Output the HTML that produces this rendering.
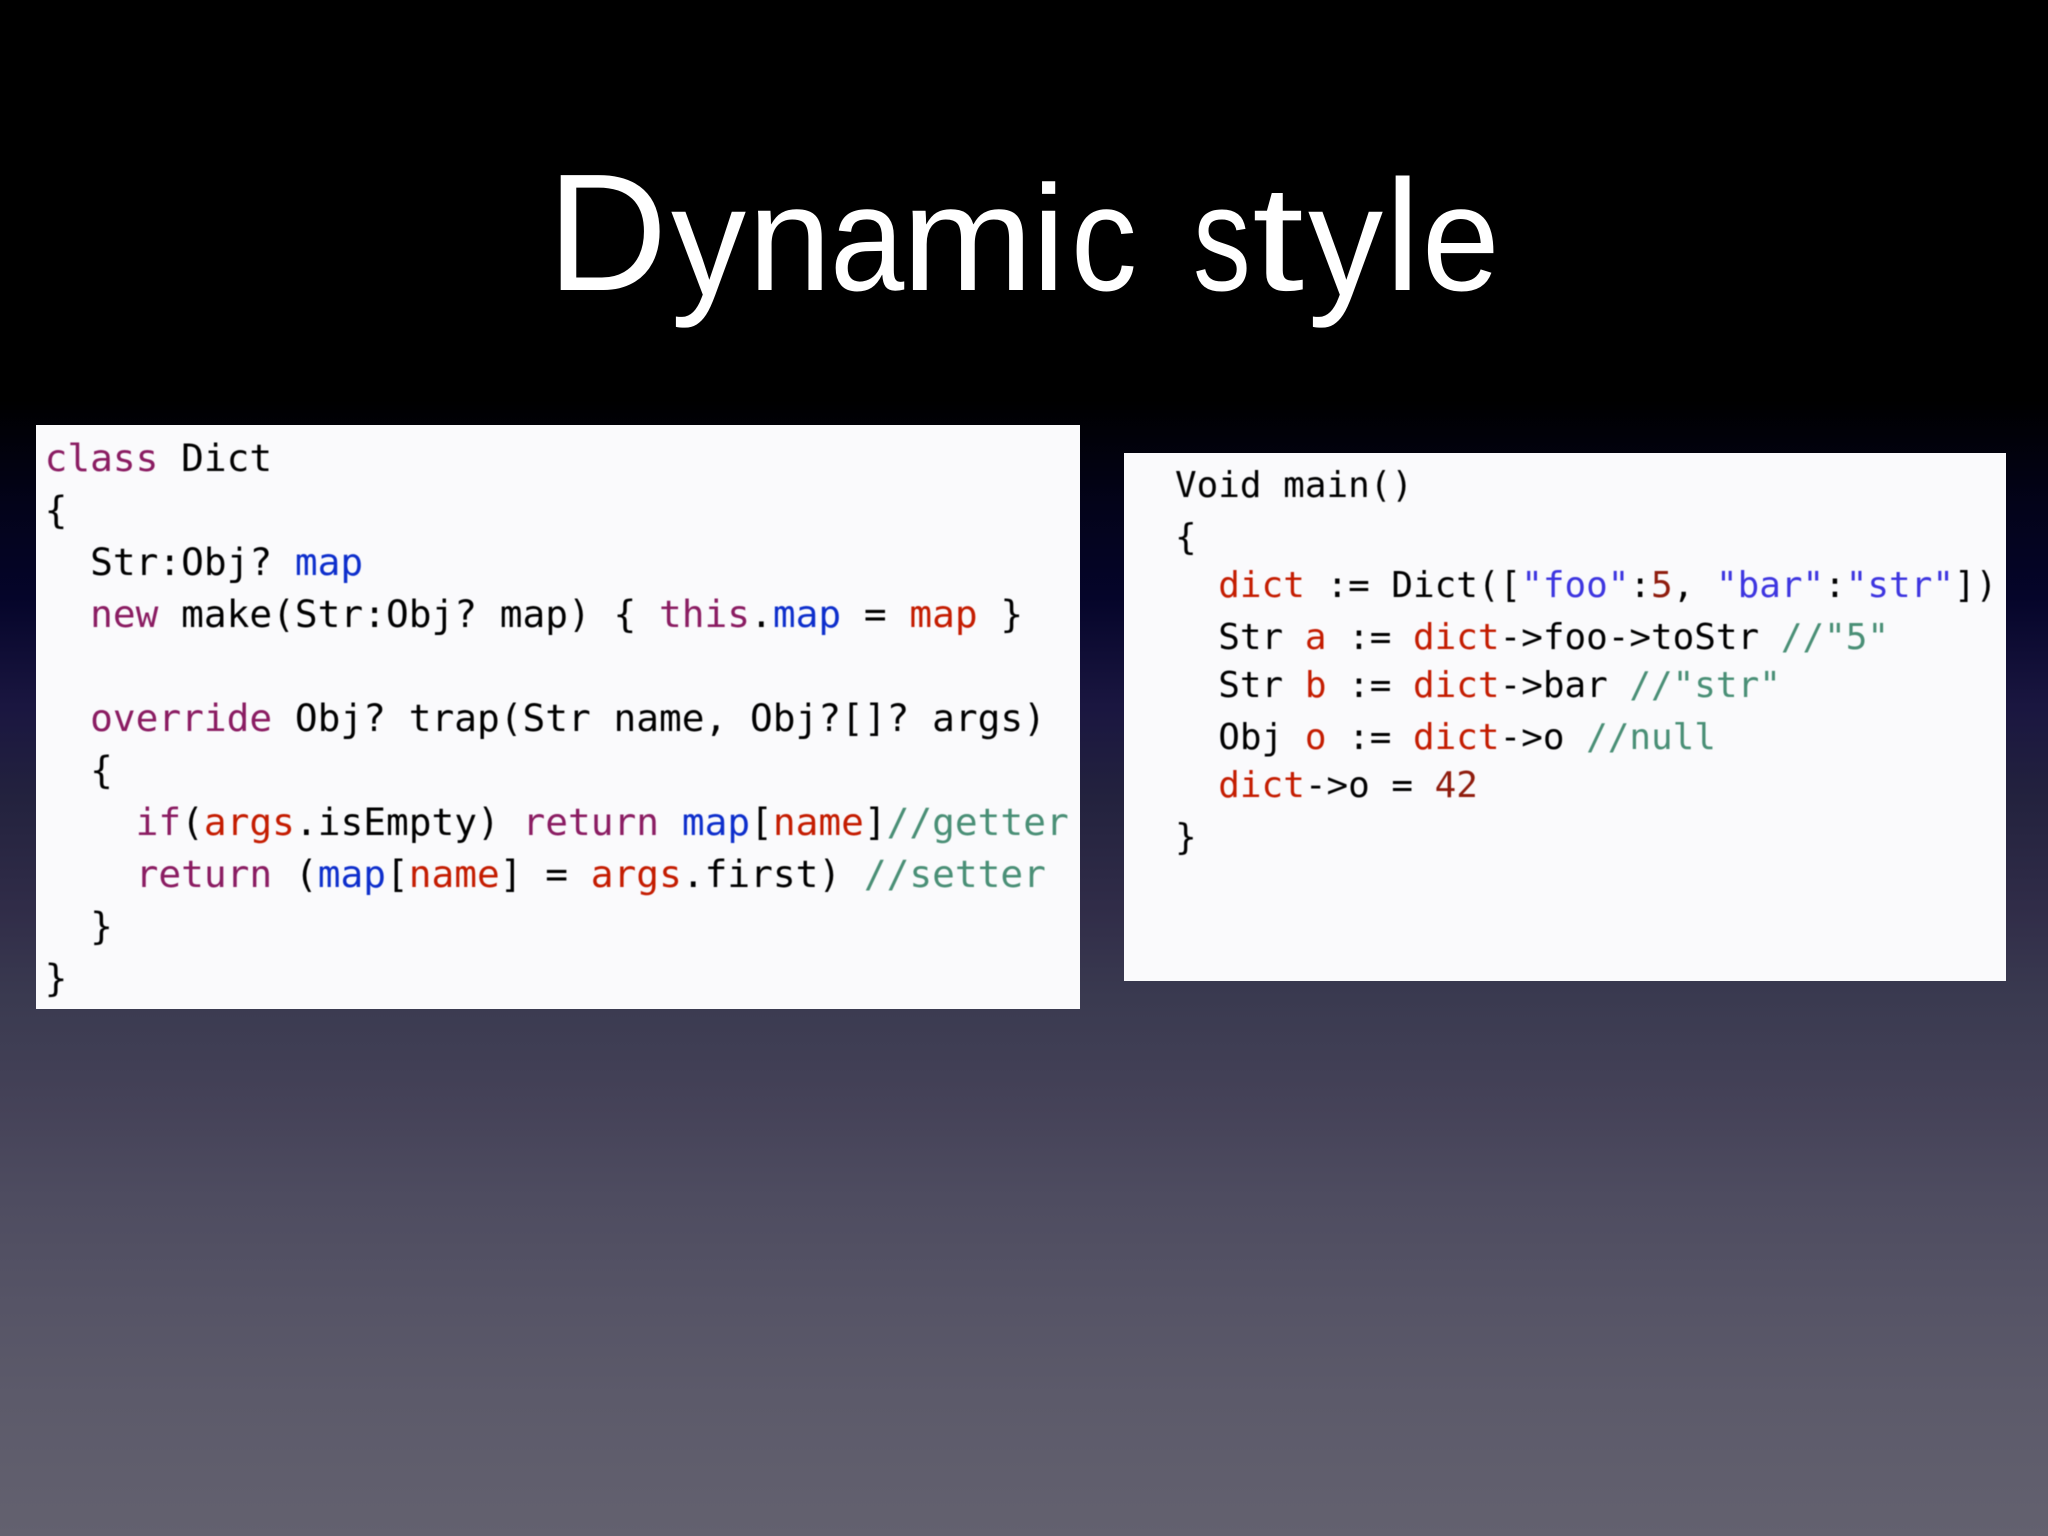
<!DOCTYPE html>
<html><head><meta charset="utf-8"><style>
html,body{margin:0;padding:0;width:2048px;height:1536px;overflow:hidden;background:#000}
svg{display:block}
.l{font-family:"DejaVu Sans Mono","Liberation Mono",monospace;font-size:37.8px;fill:#060606;white-space:pre}
.r{font-family:"DejaVu Sans Mono","Liberation Mono",monospace;font-size:35.95px;fill:#060606;white-space:pre}
.k{fill:#8a1a62}.b{fill:#0a2fcc}.d{fill:#c41a00}.g{fill:#4a8f76}.s{fill:#3c35e0}.n{fill:#8f1a0c}
.t{font-family:"Liberation Sans",sans-serif;fill:#fff;font-size:150px}
</style></head><body>
<svg width="2048" height="1536" viewBox="0 0 2048 1536" xmlns="http://www.w3.org/2000/svg">
<defs><linearGradient id="bg" gradientUnits="userSpaceOnUse" x1="0" y1="0" x2="0" y2="1536">
<stop offset="0" stop-color="#000"/><stop offset="0.26" stop-color="#000"/><stop offset="0.33" stop-color="#03031a"/><stop offset="0.39" stop-color="#05052a"/><stop offset="0.46" stop-color="#1a1640"/><stop offset="0.52" stop-color="#23223e"/><stop offset="0.59" stop-color="#302c48"/><stop offset="0.65" stop-color="#3a3a50"/><stop offset="0.72" stop-color="#454258"/><stop offset="0.78" stop-color="#4e4c60"/><stop offset="0.85" stop-color="#565466"/><stop offset="0.91" stop-color="#5c5a6a"/><stop offset="1" stop-color="#63616f"/>
</linearGradient>
<filter id="soft" x="0" y="0" width="1" height="1"><feGaussianBlur stdDeviation="0.45"/></filter></defs>
<rect width="2048" height="1536" fill="url(#bg)"/>
<g>
<text class="t" style="font-size:167px" x="547" y="290">D</text>
<text class="t" transform="translate(671,295) scale(1,1.05)">y</text>
<text class="t" x="748" y="290">n</text>
<text class="t" transform="translate(830,290) scale(.89,1)">a</text>
<text class="t" transform="translate(902,290) scale(1.05,1)">m</text>
<text class="t" x="1032" y="290">i</text>
<text class="t" transform="translate(1071,290) scale(.88,1)">c</text>
<text class="t" transform="translate(1193,290) scale(.77,1)">s</text>
<text class="t" transform="translate(1252,290) scale(1.25,1)">t</text>
<text class="t" transform="translate(1308,295) scale(1,1.05)">y</text>
<text class="t" style="font-size:158px" x="1385" y="290">l</text>
<text class="t" transform="translate(1422,290) scale(.93,1)">e</text>
</g>
<rect x="36" y="425" width="1044" height="584" fill="#fafafc"/>
<rect x="1124" y="453" width="882" height="528" fill="#fafafc"/>
<g filter="url(#soft)">
<text class="l" x="44.6" y="471"><tspan class="k">class</tspan> Dict</text>
<text class="l" x="44.6" y="523">{</text>
<text class="l" x="44.6" y="575">  Str:Obj? <tspan class="b">map</tspan></text>
<text class="l" x="44.6" y="627">  <tspan class="k">new</tspan> make(Str:Obj? map) { <tspan class="k">this</tspan>.<tspan class="b">map</tspan> = <tspan class="d">map</tspan> }</text>
<text class="l" x="44.6" y="731">  <tspan class="k">override</tspan> Obj? trap(Str name, Obj?[]? args)</text>
<text class="l" x="44.6" y="783">  {</text>
<text class="l" x="44.6" y="835">    <tspan class="k">if</tspan>(<tspan class="d">args</tspan>.isEmpty) <tspan class="k">return</tspan> <tspan class="b">map</tspan>[<tspan class="d">name</tspan>]<tspan class="g">//getter</tspan></text>
<text class="l" x="44.6" y="887">    <tspan class="k">return</tspan> (<tspan class="b">map</tspan>[<tspan class="d">name</tspan>] = <tspan class="d">args</tspan>.first) <tspan class="g">//setter</tspan></text>
<text class="l" x="44.6" y="939">  }</text>
<text class="l" x="44.6" y="991">}</text>

<text class="r" x="1175" y="497">Void main()</text>
<text class="r" x="1175" y="549">{</text>
<text class="r" x="1175" y="597">  <tspan class="d">dict</tspan> := Dict([<tspan class="s">"foo"</tspan>:<tspan class="n">5</tspan>, <tspan class="s">"bar"</tspan>:<tspan class="s">"str"</tspan>])</text>
<text class="r" x="1175" y="649">  Str <tspan class="d">a</tspan> := <tspan class="d">dict</tspan>-&gt;foo-&gt;toStr <tspan class="g">//"5"</tspan></text>
<text class="r" x="1175" y="697">  Str <tspan class="d">b</tspan> := <tspan class="d">dict</tspan>-&gt;bar <tspan class="g">//"str"</tspan></text>
<text class="r" x="1175" y="749">  Obj <tspan class="d">o</tspan> := <tspan class="d">dict</tspan>-&gt;o <tspan class="g">//null</tspan></text>
<text class="r" x="1175" y="797">  <tspan class="d">dict</tspan>-&gt;o = <tspan class="n">42</tspan></text>
<text class="r" x="1175" y="849">}</text>
</g>
</svg>
</body></html>
